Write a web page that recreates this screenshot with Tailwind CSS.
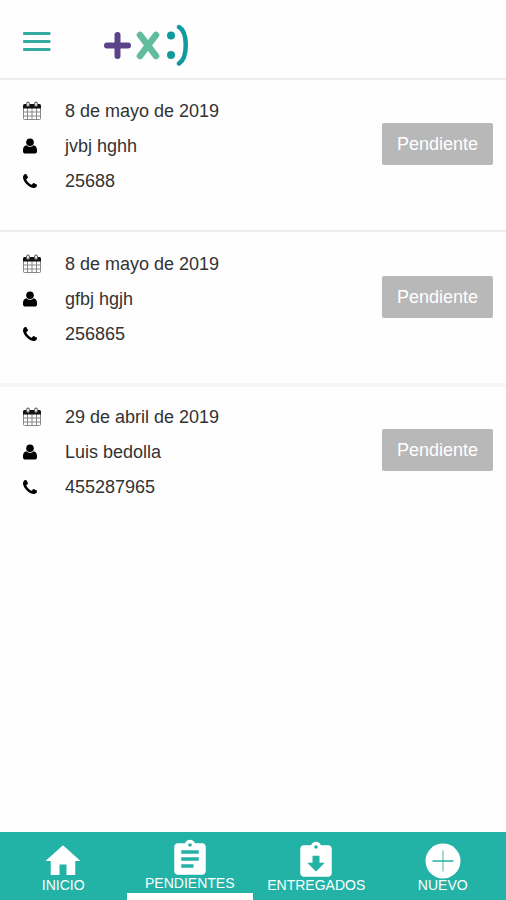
<!DOCTYPE html>
<html lang="es">

<head>
    <meta charset="UTF-8" />
    <meta name="viewport" content="width=device-width, initial-scale=1.0" />
    <title>Pendientes</title>
    <script src="https://cdn.jsdelivr.net/npm/@tailwindcss/browser@4"></script>
</head>

<body class="min-h-screen flex flex-col bg-[#fefefe] text-[#333] font-['Liberation_Sans',Arial,sans-serif]">
    <!-- shared icons -->
    <svg class="hidden" xmlns="http://www.w3.org/2000/svg">
        <symbol id="calendar" viewBox="0 0 18 19">
            <path fill="none" stroke="#888" d="M.5 7v10.500a1 1 0 0 0 1 1h15a1 1 0 0 0 1-1V7M4.500 7v11M9 7v11M13.500 7v11M1 11h16M1 15h16" />
            <path fill="#111" d="M0 7.500V4.500a1.500 1.500 0 0 1 1.500-1.500h15A1.500 1.500 0 0 1 18 4.500v3z" />
            <rect x="3.500" y="1" width="3" height="4.500" rx="1.500" fill="#ddd" stroke="#555" />
            <rect x="11.500" y="1" width="3" height="4.500" rx="1.500" fill="#ddd" stroke="#555" />
        </symbol>
        <symbol id="user" viewBox="0 0 14 16">
            <circle cx="7" cy="4.200" r="3.800" />
            <path d="M3.600 7.200C1.200 7.500 0 9.300 0 12v1.200C0 14.700.9 15.500 2.400 15.500h9.200c1.500 0 2.400-.8 2.400-2.300V12c0-2.700-1.200-4.500-3.600-4.800C9.500 8.200 8.300 8.800 7 8.800S4.500 8.200 3.600 7.200z" />
        </symbol>
        <symbol id="phone" viewBox="192 128 1408 1408">
            <path d="M1600 1240q0 27-10 70.5t-21 68.5q-21 50-122 106-94 51-186 51-27 0-53-3.5t-57.5-12.5-47-14.5-55.5-20.5-49-18q-98-35-175-83-127-79-264-216t-216-264q-48-77-83-175-3-9-18-49t-20.5-55.5-14.5-47-12.5-57.5-3.5-53q0-92 51-186 56-101 106-122 25-11 68.5-21t70.5-10q14 0 21 3 18 6 53 76 11 19 30 54t35 63.5 31 53.5q3 4 17.5 25t21.5 35.5 7 28.5q0 20-28.5 50t-62 55-62 53-28.5 46q0 9 5 22.5t8.5 20.5 14 24 11.5 19q76 137 174 235t235 174q2 1 19 11.5t24 14 20.5 8.5 22.5 5q18 0 46-28.5t53-62 55-62 50-28.5q14 0 28.5 7t35.5 21.5 25 17.5q25 15 53.5 31t63.5 35 54 30q70 35 76 53 3 7 3 21z" />
        </symbol>
    </svg>

    <header class="flex items-start gap-[53px] px-[23px] pt-6 pb-3 border-b-2 border-[#ececec]">
        <button type="button" aria-label="Menú" class="pt-2">
            <svg class="w-7 h-[19px]" viewBox="0 0 28 19" fill="#35aaa0">
                <rect y="0" width="27.500" height="3" rx="1" />
                <rect y="8" width="27.500" height="3" rx="1" />
                <rect y="16" width="27.500" height="3" rx="1" />
            </svg>
        </button>
        <svg class="w-[84px] h-[42px]" viewBox="0 0 84 42" fill="none" stroke-linecap="round">
            <path stroke="#5b4389" stroke-width="6" d="M3 21.500h21M13.500 11v21" />
            <path stroke="#62bd9c" stroke-width="6.500" d="M36 11l16 21M52 11l-16 21" />
            <circle cx="67" cy="11.500" r="4" fill="#0f9a9f" />
            <circle cx="67" cy="31" r="4" fill="#0f9a9f" />
            <path stroke="#0f9a9f" stroke-width="4.500" d="M75 3C84 8 84 34 75 39.500" />
        </svg>
    </header>

    <main class="flex-1">
        <ul>
            <li class="flex items-start justify-between pl-[23px] pr-[13px] pt-[13px] pb-8 border-b-2 border-[#ececec]">
                <div class="text-lg">
                    <p class="h-[35px] flex items-center"><span class="w-[42px]"><svg class="w-[18px] h-[19px]"><use href="#calendar" /></svg></span>8 de mayo de 2019</p>
                    <p class="h-[35px] flex items-center"><span class="w-[42px]"><svg class="w-[14px] h-4"><use href="#user" /></svg></span>jvbj hghh</p>
                    <p class="h-[35px] flex items-center"><span class="w-[42px]"><svg class="w-[14px] h-[14px]"><use href="#phone" /></svg></span>25688</p>
                </div>
                <button type="button" class="mt-[30px] h-[42px] px-[15px] pb-px rounded-xs bg-[#b8b8b8] text-white text-lg">Pendiente</button>
            </li>
            <li class="flex items-start justify-between pl-[23px] pr-[13px] pt-[14px] pb-8 border-b-4 border-[#f7f7f7]">
                <div class="text-lg">
                    <p class="h-[35px] flex items-center"><span class="w-[42px]"><svg class="w-[18px] h-[19px]"><use href="#calendar" /></svg></span>8 de mayo de 2019</p>
                    <p class="h-[35px] flex items-center"><span class="w-[42px]"><svg class="w-[14px] h-4"><use href="#user" /></svg></span>gfbj hgjh</p>
                    <p class="h-[35px] flex items-center"><span class="w-[42px]"><svg class="w-[14px] h-[14px]"><use href="#phone" /></svg></span>256865</p>
                </div>
                <button type="button" class="mt-[30px] h-[42px] px-[15px] pb-px rounded-xs bg-[#b8b8b8] text-white text-lg">Pendiente</button>
            </li>
            <li class="flex items-start justify-between pl-[23px] pr-[13px] pt-3 pb-8">
                <div class="text-lg">
                    <p class="h-[35px] flex items-center"><span class="w-[42px]"><svg class="w-[18px] h-[19px]"><use href="#calendar" /></svg></span>29 de abril de 2019</p>
                    <p class="h-[35px] flex items-center"><span class="w-[42px]"><svg class="w-[14px] h-4"><use href="#user" /></svg></span>Luis bedolla</p>
                    <p class="h-[35px] flex items-center"><span class="w-[42px]"><svg class="w-[14px] h-[14px]"><use href="#phone" /></svg></span>455287965</p>
                </div>
                <button type="button" class="mt-[30px] h-[42px] px-[15px] pb-px rounded-xs bg-[#b8b8b8] text-white text-lg">Pendiente</button>
            </li>
        </ul>
    </main>

    <!-- bottom tabs -->
    <nav class="grid grid-cols-4 h-[68px] bg-[#22b2a6] text-white text-sm leading-4">
        <a href="#" class="flex flex-col items-center pt-2">
            <svg class="w-[42px] h-[42px]" viewBox="0 0 24 24" fill="currentColor">
                <path d="M10 20v-6h4v6h5v-8h3L12 3 2 12h3v8z" />
            </svg>
            <span class="-mt-[5px]">INICIO</span>
        </a>
        <a href="#" aria-current="page" class="flex flex-col items-center pt-1.5 border-b-[7px] border-white">
            <svg class="w-[42px] h-[42px]" viewBox="0 0 24 24" fill="currentColor">
                <path d="M19 3h-4.180C14.400 1.840 13.300 1 12 1c-1.300 0-2.400.84-2.820 2H5c-1.100 0-2 .9-2 2v14c0 1.100.9 2 2 2h14c1.100 0 2-.9 2-2V5c0-1.100-.9-2-2-2zm-7 0c.55 0 1 .45 1 1s-.45 1-1 1-1-.45-1-1 .45-1 1-1zm2 14H7v-2h7v2zm3-4H7v-2h10v2zm0-4H7V7h10v2z" />
            </svg>
            <span class="-mt-[5px]">PENDIENTES</span>
        </a>
        <a href="#" class="flex flex-col items-center pt-2">
            <svg class="w-[42px] h-[42px]" viewBox="0 0 24 24" fill="currentColor">
                <path d="M19 3h-4.180C14.400 1.840 13.300 1 12 1c-1.300 0-2.400.84-2.820 2H5c-1.100 0-2 .9-2 2v14c0 1.100.9 2 2 2h14c1.100 0 2-.9 2-2V5c0-1.100-.9-2-2-2zm-7 0c.55 0 1 .45 1 1s-.45 1-1 1-1-.45-1-1 .45-1 1-1zm0 15l-5-5h3V9h4v4h3l-5 5z" />
            </svg>
            <span class="-mt-[5px]">ENTREGADOS</span>
        </a>
        <a href="#" class="flex flex-col items-center pt-2">
            <svg class="w-[42px] h-[42px]" viewBox="0 0 42 42" fill="none">
                <circle cx="21" cy="21" r="17.500" fill="currentColor" />
                <path stroke="#a5d9d4" stroke-width="2" d="M21 10.500v21" />
                <path stroke="#22b2a6" stroke-width="1.500" d="M10.500 21h21" />
            </svg>
            <span class="-mt-[5px]">NUEVO</span>
        </a>
    </nav>
</body>

</html>
